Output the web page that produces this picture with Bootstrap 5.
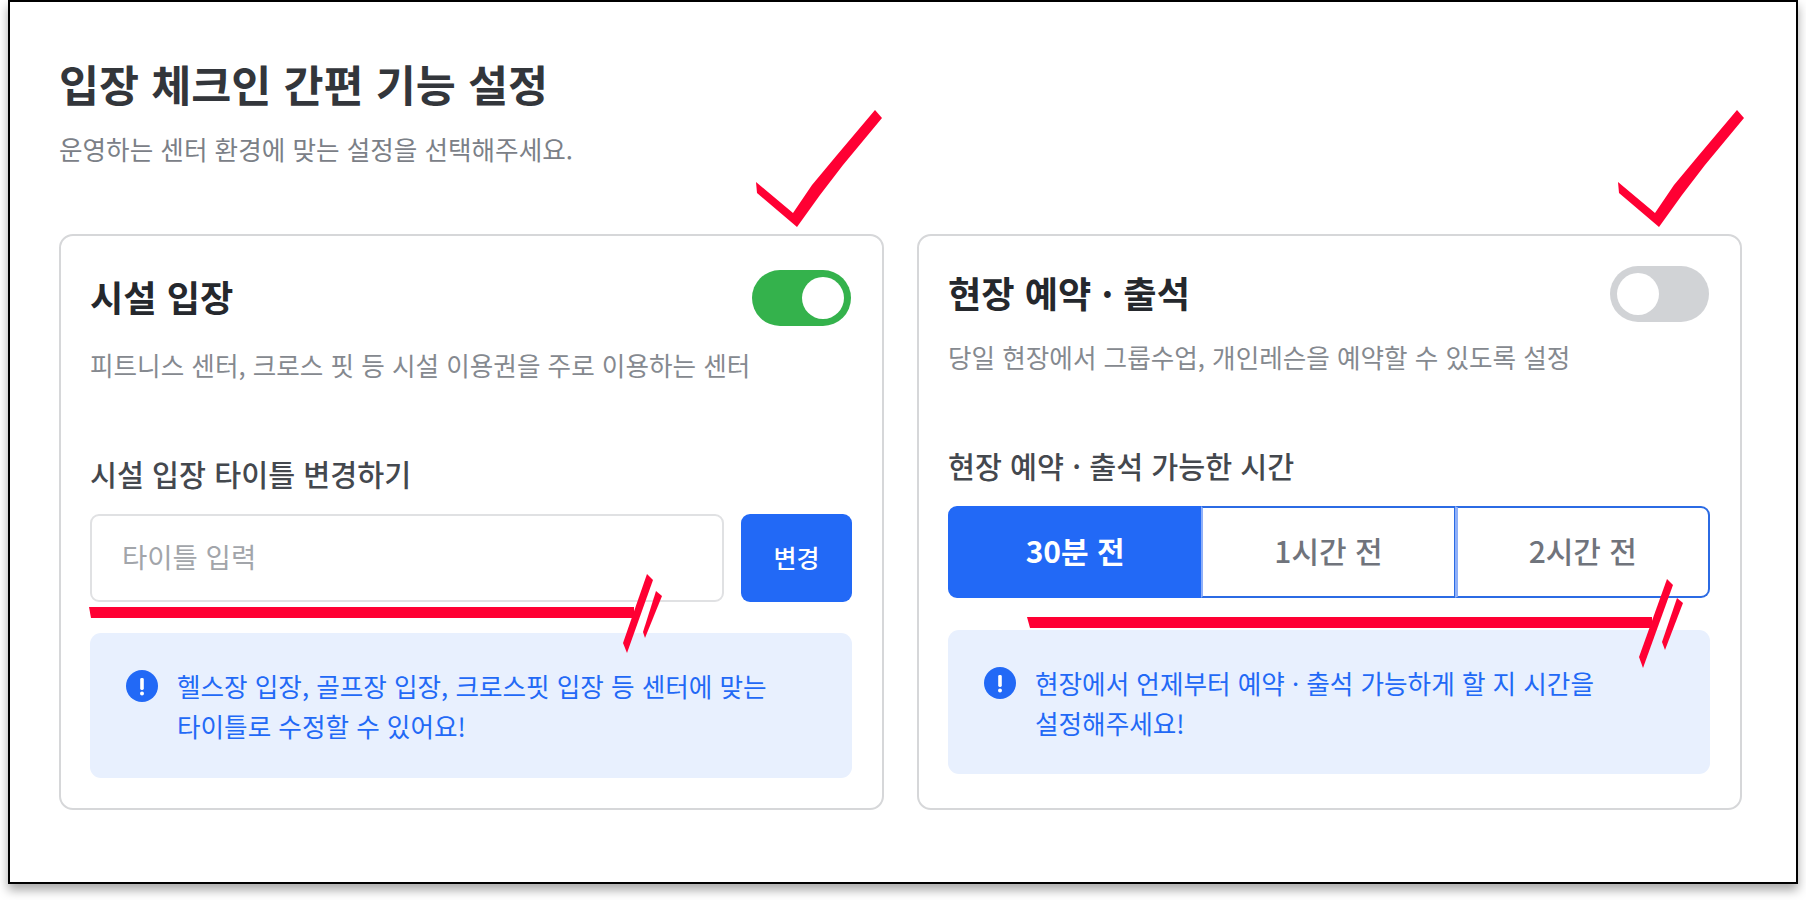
<!DOCTYPE html>
<html lang="ko">
<head>
<meta charset="utf-8">
<title>입장 체크인 간편 기능 설정</title>
<link href="https://cdn.jsdelivr.net/npm/bootstrap@5.3.0/dist/css/bootstrap.min.css" rel="stylesheet">
<style>
html,body{margin:0;height:100%;background:#fff;overflow:hidden}
body{font-family:"Noto Sans CJK KR","Noto Sans",sans-serif;color:#2b2f36;position:relative}
.frame{margin-left:8px;width:1790px;height:884px;border:2px solid #000;box-shadow:0 6px 10px rgba(0,0,0,.35);padding:60px 0 0 49px;background:#fff}
.page-title{font-size:43.5px;line-height:44px;font-weight:700;color:#33363b;margin:0}
.page-sub{font-size:25.6px;line-height:34px;color:#7b8087;margin:26px 0 0}
.cards{margin-top:68px;gap:33px}
.set-card{width:825px;height:576px;border:2px solid #d6d7d9;border-radius:14px;padding:34px 31px 0 29px;box-shadow:none}
.set-card.alt{padding-top:30px}
.head-row{height:56px}
.card-heading{font-size:36.2px;line-height:52px;padding-bottom:4px;font-weight:700;color:#25282d;margin:0}
.card-desc{font-size:25.6px;line-height:34px;color:#85898f;margin:22px 0 0}
.alt .card-desc{margin-top:18px}
.field-label{font-size:29.3px;line-height:40px;font-weight:500;color:#44484e;margin:71px 0 21px;display:block}
.form-switch .toggle-input{width:99px;height:56px;margin:0;border:0;float:none;background-color:#d1d3d6;background-image:url("data:image/svg+xml,%3csvg xmlns='http://www.w3.org/2000/svg' viewBox='-4 -4 8 8'%3e%3ccircle r='3' fill='%23fff'/%3e%3c/svg%3e");box-shadow:none}
.form-switch .toggle-input:checked{background-color:#34b24c;border:0}
.title-input{height:88px;flex:1 1 auto;min-width:0;border:2px solid #e0e1e3;border-radius:9px;padding:0 30px 4px;font-size:27.5px;color:#333}
.title-input::placeholder{color:#a2a5aa}
.change-btn{flex:0 0 111px;width:111px;height:88px;background:#2269f6;border:0;border-radius:9px;font-size:25px;font-weight:500;color:#fff}
.input-gap{gap:17px;width:762px}
.seg-group{width:762px;height:92px}
.seg-group .btn{font-size:30px;font-weight:500;color:#70747c;border:2px solid #2b6be4;background:#fff;border-radius:9px;flex:1 1 0;padding-bottom:10px}
.seg-group .btn.on{background:#2269f6;border-color:#2269f6;color:#fff;font-weight:700}
.seg-group .btn:not(.on){border-left-color:#8fb0f8}
.seg-group .btn:last-child{border-left-width:3px}
.note-box{margin:31px 0 0;height:145px;width:762px;padding:33px 36px 0;background:#e8f0fe;border:0;border-radius:11px;color:#2269f6;font-size:25.6px;line-height:40px;gap:19px}
.alt .note-box{margin-top:32px;height:144px}
.note-icon{flex:0 0 32px;width:32px;height:32px;margin-top:4px}
.marks{position:absolute;left:0;top:0;width:1806px;height:900px;pointer-events:none}
.marks polygon{fill:#ff0033}
</style>
</head>
<body>
<div class="frame">
  <h1 class="page-title">입장 체크인 간편 기능 설정</h1>
  <p class="page-sub">운영하는 센터 환경에 맞는 설정을 선택해주세요.</p>
  <div class="d-flex cards">
    <div class="card set-card">
      <div class="d-flex justify-content-between align-items-center head-row">
        <h2 class="card-heading">시설 입장</h2>
        <div class="form-check form-switch p-0 m-0"><input class="form-check-input toggle-input" type="checkbox" role="switch" checked aria-label="시설 입장"></div>
      </div>
      <p class="card-desc">피트니스 센터, 크로스 핏 등 시설 이용권을 주로 이용하는 센터</p>
      <label class="field-label" for="titleField">시설 입장 타이틀 변경하기</label>
      <div class="d-flex input-gap">
        <input id="titleField" class="form-control title-input" type="text" placeholder="타이틀 입력">
        <button class="btn btn-primary change-btn" type="button">변경</button>
      </div>
      <div class="alert d-flex note-box" role="alert">
        <svg class="note-icon" viewBox="0 0 32 32"><circle cx="16" cy="16" r="16" fill="#2269f6"/><rect x="14.2" y="8" width="3.6" height="12" rx="1.4" fill="#fff"/><circle cx="16" cy="23.5" r="2" fill="#fff"/></svg>
        <div>헬스장 입장, 골프장 입장, 크로스핏 입장 등 센터에 맞는<br>타이틀로 수정할 수 있어요!</div>
      </div>
    </div>
    <div class="card set-card alt">
      <div class="d-flex justify-content-between align-items-center head-row">
        <h2 class="card-heading">현장 예약 · 출석</h2>
        <div class="form-check form-switch p-0 m-0"><input class="form-check-input toggle-input" type="checkbox" role="switch" aria-label="현장 예약 · 출석"></div>
      </div>
      <p class="card-desc">당일 현장에서 그룹수업, 개인레슨을 예약할 수 있도록 설정</p>
      <span class="field-label">현장 예약 · 출석 가능한 시간</span>
      <div class="btn-group seg-group" role="group">
        <button type="button" class="btn on">30분 전</button>
        <button type="button" class="btn">1시간 전</button>
        <button type="button" class="btn">2시간 전</button>
      </div>
      <div class="alert d-flex note-box" role="alert">
        <svg class="note-icon" viewBox="0 0 32 32"><circle cx="16" cy="16" r="16" fill="#2269f6"/><rect x="14.2" y="8" width="3.6" height="12" rx="1.4" fill="#fff"/><circle cx="16" cy="23.5" r="2" fill="#fff"/></svg>
        <div>현장에서 언제부터 예약 · 출석 가능하게 할 지 시간을<br>설정해주세요!</div>
      </div>
    </div>
  </div>
</div>
<svg class="marks" viewBox="0 0 1806 900" aria-hidden="true">
  <polygon points="756,182 757,193 797,227 820,195 843,165 882,118 875,110 837,155 812,185 793,213"/>
  <polygon points="1618,182 1619,193 1659,227 1682,195 1705,165 1744,118 1737,110 1699,155 1674,185 1655,213"/>
  <polygon points="89,607 634,607 634,618 91,618"/>
  <polygon points="647,574 653,580 627,653 623,643"/>
  <polygon points="656,591 662,596 645,638 643,632"/>
  <polygon points="1027,617 1652,617 1652,628 1030,628"/>
  <polygon points="1667,579 1673,585 1643,668 1639,657"/>
  <polygon points="1677,598 1683,603 1665,650 1662,642"/>
</svg>
<script src="https://cdn.jsdelivr.net/npm/bootstrap@5.3.0/dist/js/bootstrap.bundle.min.js"></script>
</body>
</html>
